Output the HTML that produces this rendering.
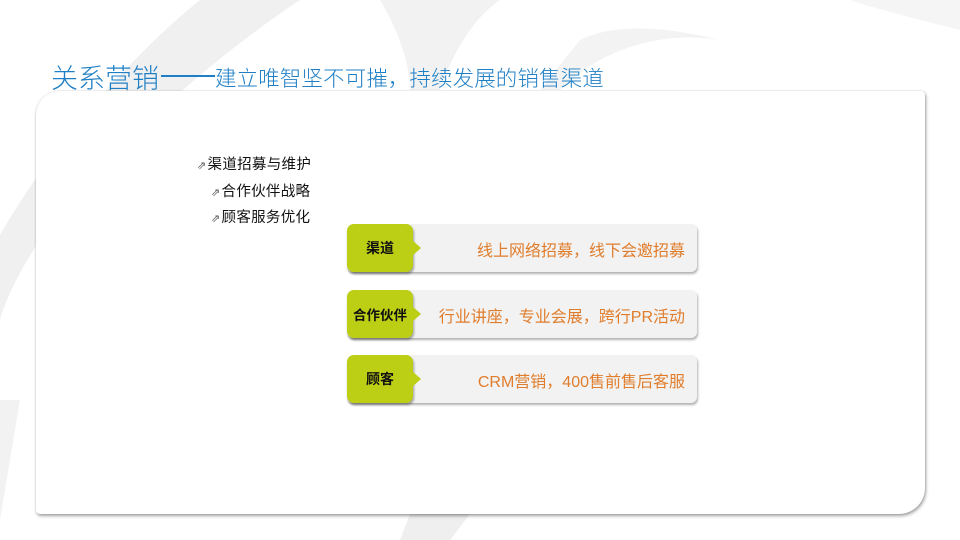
<!DOCTYPE html>
<html><head><meta charset="utf-8"><style>
*{margin:0;padding:0;box-sizing:border-box}
body{width:960px;height:540px;background:#fff;position:relative;overflow:hidden;font-family:"Liberation Sans","Noto Sans CJK SC",sans-serif}
.t1{position:absolute;top:57px;left:51px;color:#1f7fc5;white-space:nowrap;font-weight:300;font-size:27px}
.t2{position:absolute;top:62px;left:215px;color:#1f7fc5;white-space:nowrap;font-weight:300;font-size:21.5px;letter-spacing:0.1px}
.dash{position:absolute;left:161px;top:75px;width:54px;height:1.5px;background:#1f7fc5}
.card{position:absolute;left:36px;top:91px;width:889px;height:423px;background:#fff;border-radius:24px 4px 26px 4px;box-shadow:1px 2px 3px rgba(0,0,0,.35),0 0 2px rgba(0,0,0,.15)}
.li{position:absolute;font-size:14.5px;color:#111;white-space:nowrap;letter-spacing:0.3px}
.li i{font-style:normal;font-size:11px;color:#555;margin-right:1px}
.bar{position:absolute;left:347px;width:350px;height:48px;background:#f2f2f2;border-radius:6px;box-shadow:1px 2px 2px rgba(0,0,0,.3)}
.g{position:absolute;left:0;top:0;width:66px;height:48px;background:#bccf14;border-radius:7px;box-shadow:1px 2px 2px rgba(0,0,0,.35);font-weight:bold;font-size:14px;color:#111;display:flex;align-items:center;justify-content:center}
.g:after{content:"";position:absolute;right:-8px;top:16px;border-left:9px solid #bccf14;border-top:8px solid transparent;border-bottom:8px solid transparent}
.o{position:absolute;right:12px;top:13px;font-size:16px;color:#e07d2c;white-space:nowrap}
</style></head><body>
<svg width="960" height="540" style="position:absolute;left:0;top:0">
<path d="M0 235 C60 130 150 40 200 0 L300 0 C210 60 120 140 40 240 C20 270 5 300 0 320Z" fill="#f0f0f0"/>
<path d="M380 0 L500 0 C470 20 450 60 440 90 L410 90 C410 60 395 25 380 0Z" fill="#f2f2f2"/>
<path d="M560 90 C600 50 660 30 720 40 C680 30 620 20 580 40 L540 90Z" fill="#f3f3f3"/>
<path d="M850 0 L960 0 L960 30 C920 20 880 10 850 0Z" fill="#f5f5f5"/>
<path d="M0 400 L20 400 L0 520Z" fill="#f2f2f2"/>
<path d="M410 514 L470 514 L450 540 L400 540Z" fill="#efefef"/>
</svg>
<div class="t1">关系营销</div><div class="dash"></div>
<div class="t2">建立唯智坚不可摧，持续发展的销售渠道</div>
<div class="card"></div>
<div class="li" style="left:197px;top:153px"><i>⇗</i>渠道招募与维护</div>
<div class="li" style="left:211px;top:180px"><i>⇗</i>合作伙伴战略</div>
<div class="li" style="left:211px;top:206px"><i>⇗</i>顾客服务优化</div>
<div class="bar" style="top:224px"><div class="g">渠道</div><div class="o">线上网络招募，线下会邀招募</div></div>
<div class="bar" style="top:290px"><div class="g" style="font-size:13.5px">合作伙伴</div><div class="o">行业讲座，专业会展，跨行PR活动</div></div>
<div class="bar" style="top:355px"><div class="g">顾客</div><div class="o">CRM营销，400售前售后客服</div></div>
</body></html>
